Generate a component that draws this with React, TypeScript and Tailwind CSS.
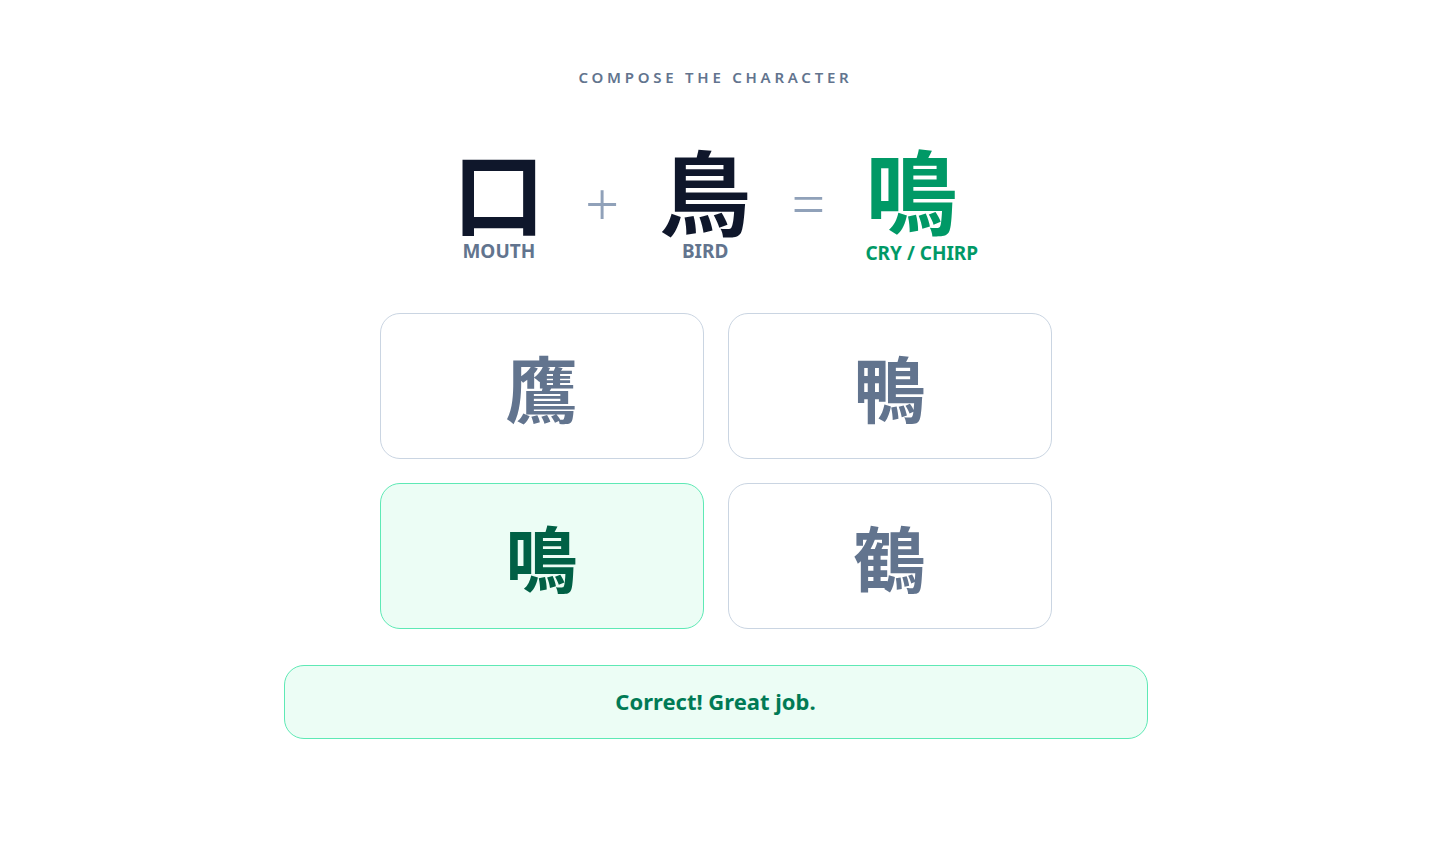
import { useState } from "react"

const FONT = "font-['Noto_Sans','Noto_Sans_CJK_JP',sans-serif]"
const CJK = "font-['Noto_Sans_CJK_JP','Noto_Sans_CJK_SC',sans-serif]"

const options = ["鷹", "鴨", "鳴", "鶴"]

function Part(props: { char: string; label: string; answer?: boolean }) {
  return (
    <div className="flex flex-col items-center">
      <div
        className={`${CJK} text-[92px] leading-none font-bold ${
          props.answer ? "self-start text-emerald-600" : "text-slate-900"
        }`}
      >
        {props.char}
      </div>
      <div
        className={`text-[19px] leading-6 font-bold ${
          props.answer ? "mt-[7px] text-emerald-600" : "mt-1 text-slate-500"
        }`}
      >
        {props.label}
      </div>
    </div>
  )
}

function Sign(props: { children: string }) {
  return (
    <div className="text-[60px] leading-none font-light text-slate-400">
      {props.children}
    </div>
  )
}

export default function App() {
  const [picked, setPicked] = useState("鳴")

  return (
    <div className={`${FONT} min-h-screen bg-white`}>
      <div className="mx-auto flex max-w-4xl flex-col items-center px-4 pt-[66px]">
        <h1 className="text-[15px] font-semibold tracking-[0.25em] text-slate-500">
          COMPOSE THE CHARACTER
        </h1>

        <div className="mt-[53px] flex items-center gap-10">
          <Part char="口" label="MOUTH" />
          <Sign>+</Sign>
          <Part char="鳥" label="BIRD" />
          <Sign>=</Sign>
          <Part char="鳴" label="CRY / CHIRP" answer />
        </div>

        <div className="mt-12 grid w-full max-w-2xl grid-cols-2 gap-6">
          {options.map((c) => {
            const active = picked === c
            return (
              <button
                key={c}
                onClick={() => setPicked(c)}
                className={`flex h-[146px] items-center justify-center rounded-[20px] border ${
                  active
                    ? "border-emerald-300 bg-emerald-50 text-emerald-800"
                    : "border-slate-300 bg-white text-slate-500"
                }`}
              >
                <span className={`${CJK} text-[72px] leading-none font-bold`}>{c}</span>
              </button>
            )
          })}
        </div>

        <div className="mt-9 flex h-[74px] w-full items-center justify-center rounded-[20px] border border-emerald-300 bg-emerald-50">
          <span className="text-[22px] font-bold text-emerald-700">
            {picked === "鳴" ? "Correct! Great job." : "Not quite. Try again."}
          </span>
        </div>
      </div>
    </div>
  )
}
